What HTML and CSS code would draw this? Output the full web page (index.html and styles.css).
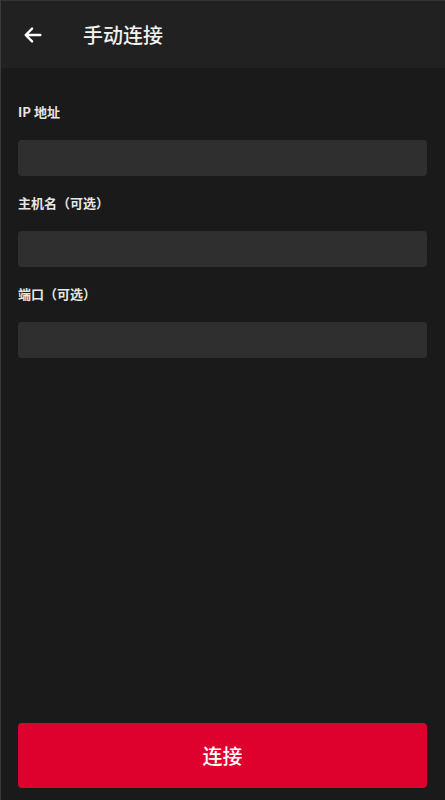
FILE: index.html
```html
<!DOCTYPE html>
<html>

<head>
  <meta charset="utf8">
  <title>手动连接</title>
  <link rel="stylesheet" href="styles.css">
</head>

<body>
  <div class="pantalla">
    <div class="barra">
      <svg class="volver" width="22" height="22" viewBox="0 0 24 24">
        <path d="M20 12H5M11 5l-7 7 7 7" fill="none" stroke="#fff" stroke-width="2.6" stroke-linecap="round" stroke-linejoin="round"/>
      </svg>
      <h1>手动连接</h1>
    </div>

    <div class="formulario">
      <label class="etiqueta">IP 地址</label>
      <input type="text" class="campo">

      <label class="etiqueta">主机名（可选）</label>
      <input type="text" class="campo">

      <label class="etiqueta">端口（可选）</label>
      <input type="text" class="campo">
    </div>

    <button class="conectar">连接</button>
  </div>
</body>

</html>
```

FILE: styles.css
```css
/* Estilos generales */
body {
  margin: 0;
  background: #1a1a1a;
  font-family: "Noto Sans CJK SC", "Noto Sans", sans-serif;
  color: #eee;
}

.pantalla {
  height: 800px;
  box-sizing: border-box;
  display: flex;
  flex-direction: column;
  border-left: 1px solid #3a3a3a;
}

/* Barra superior */
.barra {
  height: 68px;
  flex-shrink: 0;
  background: #212121;
  display: flex;
  align-items: center;
  padding-left: 21px;
  border-top: 1px solid #333;
  box-sizing: border-box;
}

.volver {
  margin-top: 1px;
}

.barra h1 {
  margin: 0 0 0 39px;
  font-size: 20px;
  font-weight: 500;
  color: #f2f2f2;
}

/* Formulario */
.formulario {
  display: flex;
  flex-direction: column;
  padding: 34px 18px 0 17px;
}

.etiqueta {
  font-size: 13px;
  font-weight: 700;
  line-height: 20px;
  color: #e6e6e6;
  margin-bottom: 18px;
}

.campo {
  height: 36px;
  box-sizing: border-box;
  background: #2f2f2f;
  border: none;
  border-radius: 4px;
  margin-bottom: 17px;
  outline: none;
}

/* Botón conectar */
.conectar {
  margin: auto 18px 12px 17px;
  height: 65px;
  background: #de002d;
  color: #fff;
  border: none;
  border-radius: 4px;
  font-family: inherit;
  font-size: 20px;
  font-weight: 500;
}
```
